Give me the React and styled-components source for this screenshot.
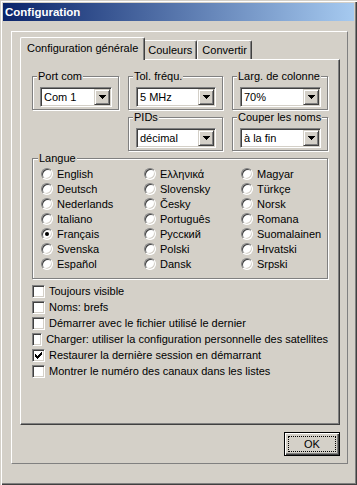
import React from 'react';
import styled, { createGlobalStyle } from 'styled-components';

const GlobalStyle = createGlobalStyle`
  html, body { margin: 0; padding: 0; background: #d4d0c8; }
  body {
    font-family: "Liberation Sans", Arial, sans-serif;
    font-size: 11px;
    color: #000;
  }
`;

const Window = styled.div`
  box-sizing: border-box;
  width: 357px;
  height: 485px;
  padding: 3px;
  background: #d4d0c8;
  box-shadow: inset 1px 1px 0 #d4d0c8, inset 2px 2px 0 #fff,
    inset -1px -1px 0 #404040, inset -2px -2px 0 #808080;
  display: flex;
  flex-direction: column;
`;

const TitleBar = styled.div`
  height: 18px;
  padding-left: 2px;
  display: flex;
  align-items: center;
  background: linear-gradient(to right, #0a246a, #a6caf0);
  color: #fff;
  font-weight: bold;
  font-size: 11.5px;
`;

const Body = styled.div`
  padding: 10px 0 0 8px;
`;

const OuterPanel = styled.div`
  box-sizing: border-box;
  width: 337px;
  height: 433px;
  padding: 5px 7px 0 8px;
  border: 1px solid;
  border-color: #fff #808080 #808080 #fff;
  display: flex;
  flex-direction: column;
`;

const TabStrip = styled.div`
  height: 22px;
  padding-left: 2px;
  display: flex;
  align-items: flex-end;
`;

const Tab = styled.div`
  position: relative;
  z-index: ${p => (p.$active ? 1 : 0)};
  box-sizing: border-box;
  height: ${p => (p.$active ? 23 : 19)}px;
  margin: 0 ${p => (p.$active ? '-2px' : '0')} ${p => (p.$active ? '-1px' : '0')};
  padding: 0 ${p => (p.$active ? 6 : 4)}px ${p => (p.$active ? 2 : 0)}px;
  display: flex;
  align-items: center;
  background: #d4d0c8;
  border-top: 1px solid #fff;
  border-left: 1px solid #fff;
  border-right: 1px solid #404040;
  border-radius: 2px 2px 0 0;
  box-shadow: inset -1px 0 0 #808080;
  white-space: nowrap;
`;

const TabPanel = styled.div`
  box-sizing: border-box;
  width: 320px;
  height: 366px;
  padding: 10px 11px 0 11px;
  border: 1px solid;
  border-color: #fff #404040 #404040 #fff;
  box-shadow: inset -1px -1px 0 #808080;
`;

const GroupGrid = styled.div`
  display: grid;
  grid-template-columns: 87px 95px 96px;
  column-gap: 9px;
  row-gap: 1px;
`;

const Group = styled.fieldset`
  grid-column: ${p => p.$col || 'auto'};
  margin: 0;
  min-width: 0;
  padding: ${p => p.$pad || '4px 6px 2px 7px'};
  border: 1px solid #808080;
  box-shadow: 1px 1px 0 #fff, inset 1px 1px 0 #fff;
`;

const Legend = styled.legend`
  margin-left: -3px;
  padding: 0 1px;
  line-height: 13px;
  white-space: nowrap;
  background: #d4d0c8;
`;

const Combo = styled.div`
  box-sizing: border-box;
  height: 20px;
  padding: 1px;
  display: flex;
  align-items: center;
  background: #fff;
  border: 1px solid;
  border-color: #808080 #fff #fff #808080;
  box-shadow: inset 1px 1px 0 #404040, inset -1px -1px 0 #d4d0c8;
`;

const ComboText = styled.span`
  flex: 1;
  padding-left: 2px;
  white-space: nowrap;
`;

const DropButton = styled.span`
  box-sizing: border-box;
  width: 16px;
  height: 16px;
  display: flex;
  align-items: center;
  justify-content: center;
  background: #d4d0c8;
  border: 1px solid;
  border-color: #d4d0c8 #404040 #404040 #d4d0c8;
  box-shadow: inset 1px 1px 0 #fff, inset -1px -1px 0 #808080;
`;

const Arrow = () => (
  <svg width="7" height="4" viewBox="0 0 7 4" shapeRendering="crispEdges">
    <rect x="0" y="0" width="7" height="1" fill="#000" />
    <rect x="1" y="1" width="5" height="1" fill="#000" />
    <rect x="2" y="2" width="3" height="1" fill="#000" />
    <rect x="3" y="3" width="1" height="1" fill="#000" />
  </svg>
);

const RadioGrid = styled.div`
  display: grid;
  grid-template-columns: 103px 97px 1fr;
  grid-template-rows: repeat(7, 15px);
  grid-auto-flow: column;
`;

const Option = styled.label`
  display: flex;
  align-items: center;
  gap: 4px;
  white-space: nowrap;
`;

const RadioDot = styled.span`
  box-sizing: border-box;
  width: 12px;
  height: 12px;
  border-radius: 50%;
  display: flex;
  align-items: center;
  justify-content: center;
  background: #fff;
  border: 1px solid;
  border-color: #808080 #fff #fff #808080;
  box-shadow: inset 1px 1px 0 #404040, inset -1px -1px 0 #d4d0c8;
  &::after {
    content: '';
    display: ${p => (p.$on ? 'block' : 'none')};
    width: 4px;
    height: 4px;
    border-radius: 50%;
    background: #000;
  }
`;

const CheckList = styled.div`
  margin-top: 4px;
  display: flex;
  flex-direction: column;
`;

const CheckRow = styled.label`
  height: 16px;
  display: flex;
  align-items: center;
  gap: 4px;
  white-space: nowrap;
`;

const CheckBox = styled.span`
  box-sizing: border-box;
  width: 13px;
  height: 13px;
  display: flex;
  align-items: center;
  justify-content: center;
  background: #fff;
  border: 1px solid;
  border-color: #808080 #fff #fff #808080;
  box-shadow: inset 1px 1px 0 #404040, inset -1px -1px 0 #d4d0c8;
`;

const Tick = () => (
  <svg width="7" height="7" viewBox="0 0 7 7" shapeRendering="crispEdges">
    <path d="M0 2h1v3h-1zM1 3h1v3h-1zM2 4h1v3h-1zM3 3h1v3h-1zM4 2h1v3h-1zM5 1h1v3h-1zM6 0h1v3h-1z" fill="#000" />
  </svg>
);

const ButtonRow = styled.div`
  margin-top: 7px;
  display: flex;
  justify-content: flex-end;
`;

const Button = styled.button`
  box-sizing: border-box;
  width: 56px;
  height: 24px;
  padding: 3px;
  display: flex;
  background: #d4d0c8;
  border: 1px solid #000;
  box-shadow: inset 1px 1px 0 #fff, inset -1px -1px 0 #404040, inset -2px -2px 0 #808080;
  font: inherit;
  color: #000;
`;

const FocusRect = styled.span`
  flex: 1;
  display: flex;
  align-items: center;
  justify-content: center;
  border: 1px dotted #000;
`;

const combos = [
  { label: 'Port com', value: 'Com 1' },
  { label: 'Tol. fréqu.', value: '5 MHz' },
  { label: 'Larg. de colonne', value: '70%' },
  { label: 'PIDs', value: 'décimal', col: 2 },
  { label: 'Couper les noms', value: 'à la fin' },
];

const languages = [
  'English', 'Deutsch', 'Nederlands', 'Italiano', 'Français', 'Svenska', 'Español',
  'Ελληνικά', 'Slovensky', 'Česky', 'Português', 'Русский', 'Polski', 'Dansk',
  'Magyar', 'Türkçe', 'Norsk', 'Romana', 'Suomalainen', 'Hrvatski', 'Srpski',
];

const options = [
  { text: 'Toujours visible' },
  { text: 'Noms: brefs' },
  { text: 'Démarrer avec le fichier utilisé le dernier' },
  { text: 'Charger: utiliser la configuration personnelle des satellites' },
  { text: 'Restaurer la dernière session en démarrant', on: true },
  { text: 'Montrer le numéro des canaux dans les listes' },
];

export default function App() {
  return (
    <>
      <GlobalStyle />
      <Window>
        <TitleBar>Configuration</TitleBar>
        <Body>
          <OuterPanel>
            <TabStrip>
              <Tab $active>Configuration générale</Tab>
              <Tab>Couleurs</Tab>
              <Tab>Convertir</Tab>
            </TabStrip>
            <TabPanel>
              <GroupGrid>
                {combos.map(c => (
                  <Group key={c.label} $col={c.col}>
                    <Legend>{c.label}</Legend>
                    <Combo>
                      <ComboText>{c.value}</ComboText>
                      <DropButton><Arrow /></DropButton>
                    </Combo>
                  </Group>
                ))}
                <Group $col="1 / -1" $pad="1px 6px 7px 8px">
                  <Legend>Langue</Legend>
                  <RadioGrid>
                    {languages.map(l => (
                      <Option key={l}>
                        <RadioDot $on={l === 'Français'} />
                        {l}
                      </Option>
                    ))}
                  </RadioGrid>
                </Group>
              </GroupGrid>
              <CheckList>
                {options.map(o => (
                  <CheckRow key={o.text}>
                    <CheckBox>{o.on && <Tick />}</CheckBox>
                    {o.text}
                  </CheckRow>
                ))}
              </CheckList>
            </TabPanel>
            <ButtonRow>
              <Button><FocusRect>OK</FocusRect></Button>
            </ButtonRow>
          </OuterPanel>
        </Body>
      </Window>
    </>
  );
}
